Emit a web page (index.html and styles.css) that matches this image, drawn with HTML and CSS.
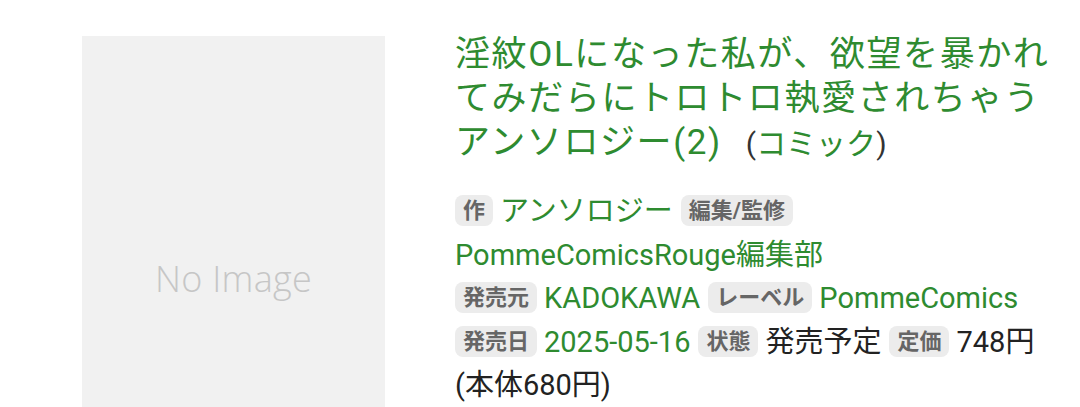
FILE: index.html
```html
<!DOCTYPE html>
<html lang="ja">
  <head>
    <meta charset="UTF-8" />
    <meta name="viewport" content="width=device-width, initial-scale=1.0" />
    <title>淫紋OLになった私が、欲望を暴かれてみだらにトロトロ執愛されちゃうアンソロジー(2)</title>
    <link rel="stylesheet" href="styles.css">
  </head>
  <body>
    <div class="item">
      <div class="cover">
        <span class="cover-text">No Image</span>
      </div>
      <div class="info">
        <h1 class="title">淫紋OLになった私が、欲望を暴かれてみだらにトロトロ執愛されちゃうアンソロジー(2)<span class="kind"><span class="paren">(</span>コミック<span class="paren">)</span></span></h1>
        <div class="meta">
          <p class="row"><span class="tag">作</span><a class="link">アンソロジー</a><span class="tag">編集/監修</span><a class="link">PommeComicsRouge編集部</a></p>
          <p class="row"><span class="tag">発売元</span><a class="link">KADOKAWA</a><span class="tag">レーベル</span><a class="link">PommeComics</a></p>
          <p class="row"><span class="tag">発売日</span><a class="link">2025-05-16</a><span class="tag">状態</span><span class="value">発売予定</span><span class="tag">定価</span><span class="value">748円(本体680円)</span></p>
        </div>
      </div>
    </div>
  </body>
</html>
```

FILE: styles.css
```css
html,
body {
  margin: 0;
  background: #fff;
  font-family: Roboto, "Noto Sans CJK JP", sans-serif;
  color: #222;
}
* {
  box-sizing: border-box;
}
.item {
  display: flex;
  align-items: flex-start;
  padding: 33px 20px 0 82px;
  gap: 70px;
}
.cover {
  flex: 0 0 303px;
  height: 484px;
  margin-top: 3px;
  background: #f1f1f1;
  display: flex;
  align-items: center;
  justify-content: center;
}
.cover-text {
  font-family: "Open Sans", sans-serif;
  font-weight: 300;
  font-size: 36px;
  color: #c6c6c6;
  letter-spacing: 0.3px;
}
.info {
  flex: 1;
  min-width: 0;
}
.title {
  margin: 0;
  font-size: 35px;
  line-height: 44px;
  font-weight: 400;
  letter-spacing: 1.6px;
  color: #2e8b30;
}
.kind {
  margin-left: 24px;
  font-size: 30px;
  letter-spacing: 0;
}
.paren {
  color: #333;
}
.meta {
  margin-top: 24px;
}
.row {
  margin: 0;
  font-size: 29px;
  line-height: 43.5px;
}
.tag {
  display: inline-block;
  font-size: 22px;
  line-height: 31px;
  padding: 0 8px;
  margin-right: 7px;
  border-radius: 8px;
  background: #ececec;
  color: #666;
  font-weight: 700;
  vertical-align: 3px;
}
.link {
  color: #2e8b30;
  margin-right: 8px;
}
.value {
  color: #222;
  margin-right: 8px;
}
```
